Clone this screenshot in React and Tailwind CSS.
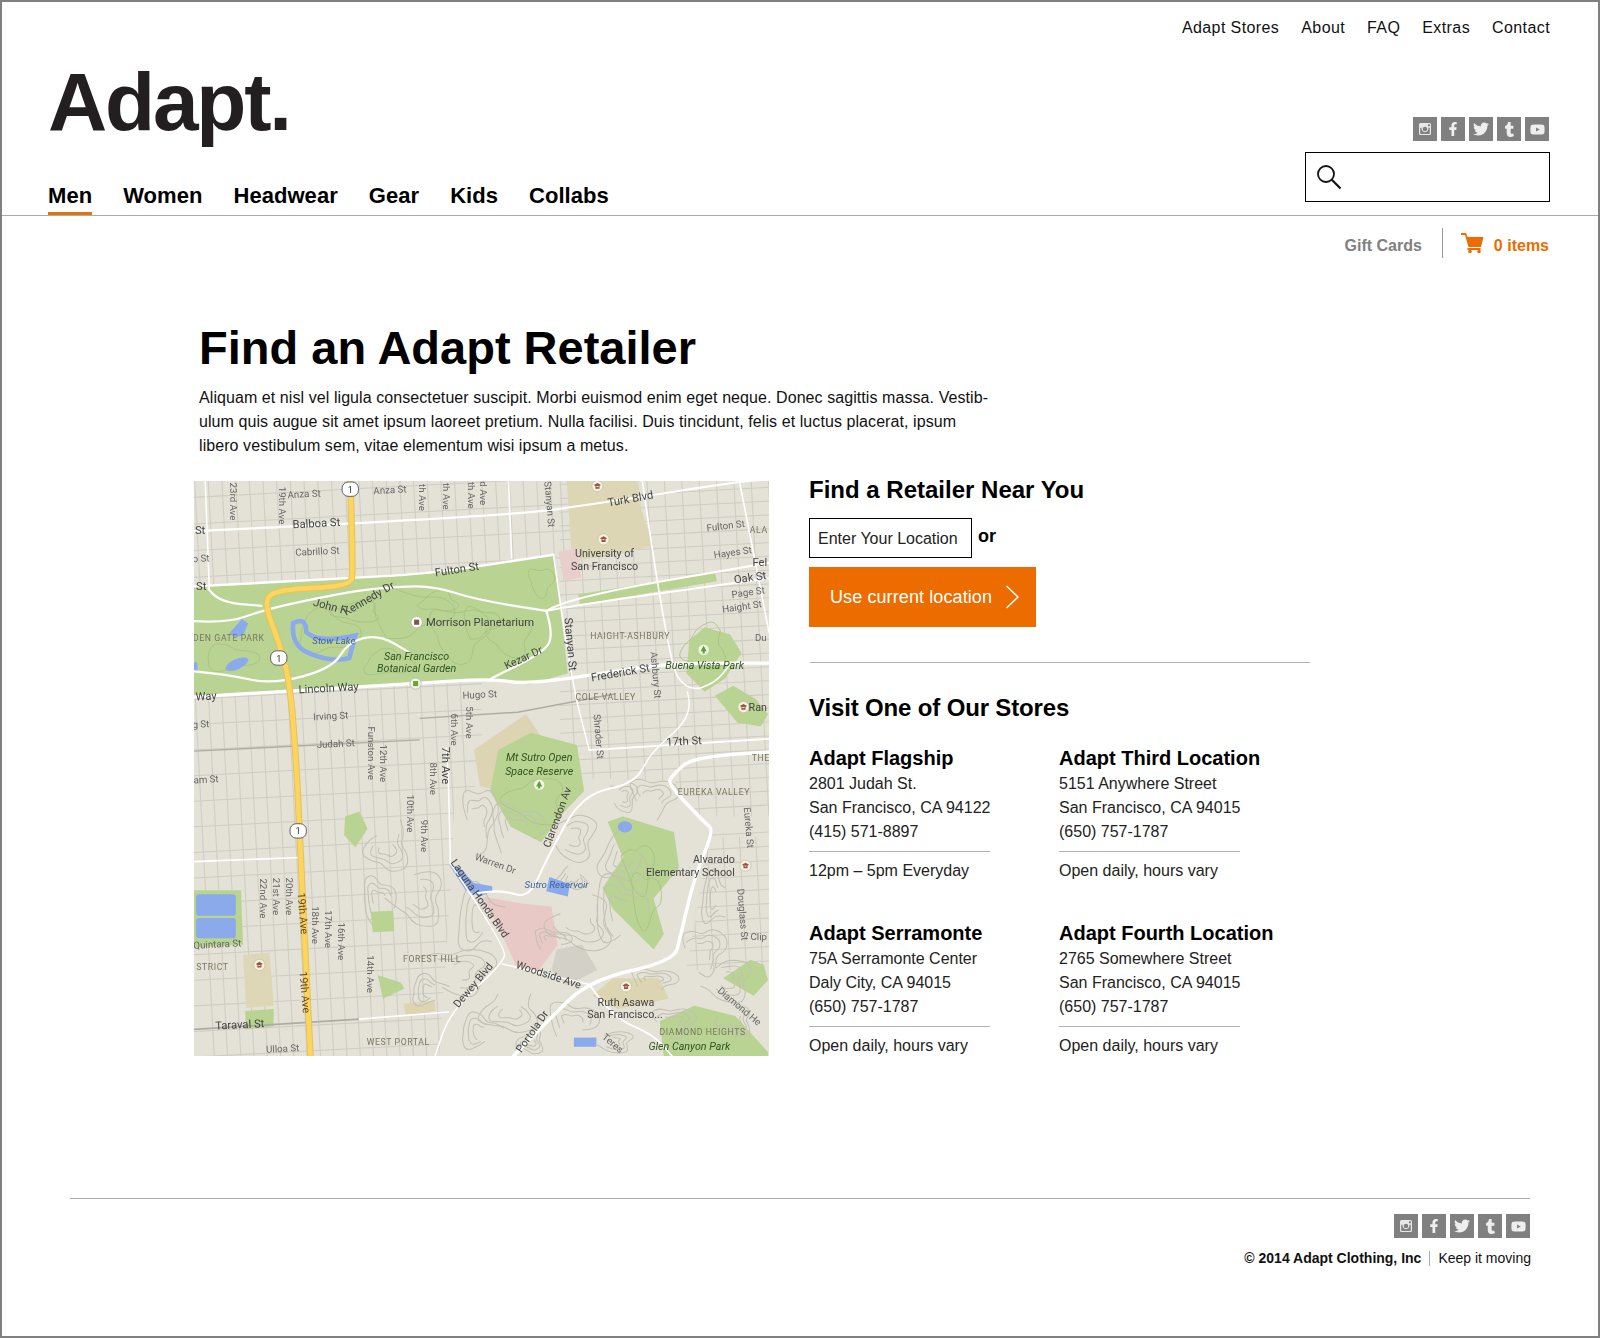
import { FaFacebookF, FaTwitter, FaTumblr, FaYoutube } from 'react-icons/fa';

// Map drawing is authored in a 563x562 coordinate space, offset to (190, 472)
function smooth(pts) {
    let d = `M${pts[0][0]} ${pts[0][1]}`;
    for (let i = 1; i < pts.length - 1; i++) {
        const mx = (pts[i][0] + pts[i + 1][0]) / 2;
        const my = (pts[i][1] + pts[i + 1][1]) / 2;
        d += ` Q${pts[i][0]} ${pts[i][1]} ${mx} ${my}`;
    }
    const last = pts[pts.length - 1];
    return `${d} L${last[0]} ${last[1]}`;
}

function poly(pts) {
    return pts.map(p => p.join(',')).join(' ');
}

function wobble(cx, cy, rx, ry, seed, steps = 14) {
    const pts = [];
    for (let i = 0; i <= steps; i++) {
        const a = (i / 14) * Math.PI * 2 + seed;
        const k = 1 + 0.28 * Math.sin(a * 3 + seed) + 0.12 * Math.cos(a * 5 + seed * 2);
        pts.push([+(cx + Math.cos(a) * rx * k).toFixed(1), +(cy + Math.sin(a) * ry * k).toFixed(1)]);
    }
    return smooth(pts);
}

const gridLines = [];
const TILT = 0.053;
function addGrid(x0, x1, y0, y1, dx, dy) {
    for (let x = x0; x <= x1; x += dx) {
        gridLines.push([x, y0, x + (y1 - y0) * TILT, y1]);
    }
    for (let y = y0; y <= y1; y += dy) {
        gridLines.push([x0, y, x1 + 20, y - (x1 + 20 - x0) * TILT]);
    }
}
addGrid(190, 548, 462, 590, 13.4, 26);
addGrid(190, 452, 660, 1040, 13, 25);
addGrid(548, 760, 462, 800, 17, 13.5);
addGrid(660, 760, 820, 1034, 16, 14);

const contours = [
    [470, 900, 24, 30, 1], [505, 810, 26, 22, 2], [470, 800, 16, 30, 3], [560, 820, 24, 22, 4], [570, 905, 30, 26, 5],
    [610, 840, 22, 26, 6], [606, 890, 26, 30, 1.5], [640, 960, 22, 12, 2.5], [450, 950, 34, 22, 3.5], [410, 880, 24, 26, 4.5],
    [500, 990, 26, 22, 5.5], [470, 1010, 20, 16, 1.2], [560, 1000, 24, 18, 2.2], [690, 930, 20, 22, 3.2], [710, 960, 26, 20, 4.2],
    [380, 830, 20, 24, 5.2], [370, 880, 16, 20, 1.8], [640, 780, 22, 18, 2.8], [610, 780, 14, 14, 3.8], [720, 1000, 16, 14, 4.8],
    [560, 860, 14, 12, 5.8], [700, 880, 14, 24, 0.8], [420, 970, 18, 14, 1.1], [540, 920, 18, 10, 2.1], [660, 1000, 20, 14, 3.1],
    [600, 1020, 20, 10, 4.1], [520, 1020, 12, 12, 5.1],
];

const parkDetail = [
    [320, 620, 30, 20, 1], [400, 600, 40, 22, 2], [450, 620, 28, 26, 3], [500, 625, 20, 18, 4], [350, 600, 22, 10, 5],
    [225, 645, 26, 12, 1.5], [632, 880, 14, 26, 2.5], [626, 850, 14, 24, 3.5], [525, 785, 28, 22, 4.5], [690, 635, 20, 22, 5.5],
    [380, 650, 24, 12, 0.5], [430, 590, 18, 10, 6], [470, 610, 18, 14, 2], [530, 570, 12, 14, 3],
];

const whiteRoads = [
    { w: 2.2, p: [[190, 521], [492, 507], [592, 493], [721, 473], [756, 470]] },
    { w: 2.4, p: [[190, 575], [345, 567], [426, 562], [542, 544]] },
    { w: 2.2, p: [[190, 609], [223, 611], [258, 598], [308, 587], [345, 580], [389, 575], [426, 575], [466, 588], [535, 599]] },
    { w: 2.2, p: [[204, 577], [212, 590], [256, 594]] },
    { w: 2.2, p: [[190, 658], [223, 661], [267, 671], [326, 655], [341, 629], [371, 622], [400, 639]] },
    { w: 2.2, p: [[535, 599], [542, 622], [533, 639], [481, 665]] },
    { w: 2, p: [[535, 599], [555, 586], [753, 552]] },
    { w: 2, p: [[535, 599], [558, 594], [753, 567]] },
    { w: 3.2, p: [[190, 683], [404, 670], [481, 665], [518, 671], [621, 655], [665, 650], [753, 650]] },
    { w: 1.5, p: [[542, 544], [558, 661], [577, 735]] },
    { w: 1.5, p: [[201, 472], [205, 577]] },
    { w: 1.5, p: [[498, 472], [501, 547]] },
    { w: 1.6, p: [[629, 472], [654, 648], [673, 678], [700, 670], [716, 650]] },
    { w: 1.6, p: [[724, 472], [753, 620]] },
    { w: 1.8, p: [[577, 735], [753, 724]] },
    { w: 1.4, p: [[673, 678], [680, 700], [640, 735], [628, 755]] },
    { w: 3.4, p: [[753, 737], [680, 740], [658, 760], [654, 768], [691, 807], [699, 813], [680, 859], [666, 918], [660, 941], [577, 960], [536, 1000], [503, 1034]] },
    { w: 2, p: [[628, 755], [621, 768], [570, 778], [536, 840], [518, 880], [492, 872], [466, 875]] },
    { w: 1.5, p: [[437, 733], [439, 755], [441, 846]] },
    { w: 1.5, p: [[441, 846], [496, 928], [492, 944], [441, 990], [426, 1034]] },
    { w: 1.6, p: [[352, 998], [439, 991]] },
    { w: 1.6, p: [[190, 844], [293, 840]] },
    { w: 1.5, p: [[492, 944], [577, 964]] },
    { w: 1.8, p: [[577, 964], [599, 996], [640, 1013], [658, 1034]] },
];

const labels = [
    ['Anza St', 298, 488, -3], ['Anza St', 382, 484, -3], ['Balboa St', 310, 517, -3, 11], ['Cabrillo St', 311, 544, -3],
    ['St', 196, 524, 0, 11], ['o St', 197, 551, -3], ['St', 197, 579, 0, 11], ['23rd Ave', 225, 492, 90], ['19th Ave', 273, 496, 90],
    ['th Ave', 410, 488, 90], ['th Ave', 434, 487, 90], ['th Ave', 458, 486, 90], ['d Ave', 470, 484, 90], ['Stanyan St', 535, 495, 85],
    ['Turk Blvd', 618, 493, -10, 11], ['Fulton St', 448, 562, -9, 11], ['University of', 592, 546, 0, 10.5], ['San Francisco', 592, 559, 0, 10.5],
    ['Fulton St', 711, 519, -7], ['Hayes St', 718, 545, -8], ['Fel', 744, 555, 0, 11], ['Oak St', 735, 570, -8, 11], ['Page St', 733, 584, -8],
    ['Haight St', 727, 598, -8], ['Du', 745, 628], ['Ran', 742, 697, 0, 10.5], ['John F', 322, 598, 15, 11], ['Kennedy Dr', 363, 590, -30, 11],
    ['Morrison Planetarium', 470, 614, 0, 11], ['Kezar Dr', 514, 648, -25, 10.5], ['Stanyan St', 555, 632, 85, 11], ['Frederick St', 608, 663, -10, 11],
    ['Ashbury St', 639, 662, 85], ['Hugo St', 470, 684, -3], ['Lincoln Way', 322, 678, -3, 11], ['Way', 202, 686, -3, 11], ['Irving St', 324, 705, -3],
    ['Judah St', 329, 732, -3], ['g St', 197, 713, -3], ['Funston Ave', 360, 738, 90], ['12th Ave', 372, 748, 90], ['5th Ave', 456, 708, 90],
    ['6th Ave', 442, 715, 90], ['7th Ave', 433, 750, 90, 11], ['Shrader St', 583, 722, 85], ['17th St', 670, 730, -3, 11], ['am St', 202, 767, -3],
    ['8th Ave', 421, 763, 90], ['10th Ave', 399, 797, 90], ['9th Ave', 412, 819, 90], ['Eureka St', 730, 811, 85], ['Clarendon Av', 549, 802, -70, 10.5],
    ['Warren Dr', 484, 849, 20], ['Alvarado', 699, 845, 0, 10.5], ['Elementary School', 676, 858, 0, 10.5], ['Laguna Honda Blvd', 467, 882, 55, 10.5],
    ['20th Ave', 280, 878, 90], ['21st Ave', 267, 878, 90], ['22nd Ave', 255, 880, 90], ['18th Ave', 306, 906, 90], ['17th Ave', 318, 910, 90],
    ['16th Ave', 331, 922, 90], ['14th Ave', 359, 954, 90], ['Douglass St', 724, 896, 85], ['Clip', 743, 921], ['Quintara St', 213, 928, -3],
    ['Dewey Blvd', 466, 967, -50, 10.5], ['Woodside Ave', 536, 958, 18, 10.5], ['Ruth Asawa', 613, 985, 0, 10.5], ['San Francisco...', 612, 997, 0, 10.5],
    ['Taraval St', 235, 1007, -3, 11], ['Ulloa St', 277, 1030, -3], ['Portola Dr', 524, 1012, -55, 10.5], ['Diamond He', 722, 988, 40], ['Teres', 598, 1024, 40],
];

const districts = [
    ['DEN GATE PARK', 224, 628], ['HAIGHT-ASHBURY', 617, 626], ['COLE VALLEY', 593, 686], ['EUREKA VALLEY', 699, 779], ['FOREST HILL', 423, 942],
    ['STRICT', 208, 950], ['WEST PORTAL', 390, 1023], ['DIAMOND HEIGHTS', 688, 1013], ['ALA', 743, 523], ['THE', 745, 746],
];

const italicGreen = [
    ['San Francisco', 408, 647], ['Botanical Garden', 408, 659], ['Buena Vista Park', 690, 656], ['Mt Sutro Open', 528, 746], ['Space Reserve', 528, 759], ['Glen Canyon Park', 675, 1028],
];

function Shield({ x, y }) {
    return (
        <g>
            <rect x={x - 8} y={y - 7} width="16" height="14" rx="6" fill="#fff" stroke="#555" strokeWidth="0.9" />
            <text x={x} y={y + 3.5} textAnchor="middle" fontSize="9" fill="#333">1</text>
        </g>
    );
}

function SchoolMark({ x, y }) {
    return (
        <g>
            <circle cx={x} cy={y} r="5.5" fill="#f5f1e2" stroke="#c9c1a8" strokeWidth="0.8" />
            <path d={`M${x - 3.5} ${y - 1} L${x} ${y - 3} L${x + 3.5} ${y - 1} L${x} ${y + 1} Z M${x - 2} ${y} V${y + 2.5} H${x + 2} V${y}`} fill="#96573f" />
        </g>
    );
}

function TreeMark({ x, y }) {
    return (
        <g>
            <circle cx={x} cy={y} r="5.5" fill="#f2f6e8" stroke="#b7cf97" strokeWidth="0.8" />
            <path d={`M${x} ${y - 4} L${x + 3} ${y + 1.5} H${x + 1} V${y + 3.5} H${x - 1} V${y + 1.5} H${x - 3} Z`} fill="#5fa02f" />
        </g>
    );
}

function RetailerMap() {
    const highway = smooth([[343, 472], [346, 560], [343, 575], [271, 578], [258, 590], [273, 629], [284, 668], [291, 760], [293, 813], [304, 1034]]);

    return (
        <svg viewBox="190 472 563 562" preserveAspectRatio="none" className="block w-[575px] h-[575px] shrink-0 mt-[7px] bg-[#e4e1d7] blur-[0.35px] font-['Roboto',sans-serif]">
            {gridLines.map((l, i) => (
                <line key={i} x1={l[0]} y1={l[1]} x2={l[2]} y2={l[3]} stroke="#cfcdc3" strokeWidth="1" />
            ))}

            {/* hills have no grid */}
            <polygon points={poly([[445, 785], [480, 760], [660, 765], [695, 820], [672, 950], [753, 950], [753, 1034], [430, 1034], [442, 860]])} fill="#e4e1d7" />

            {/* campuses and hospital */}
            <polygon points={poly([[555, 472], [625, 472], [628, 500], [640, 535], [600, 545], [560, 550]])} fill="#ddd6b4" />
            <polygon points={poly([[547, 541], [566, 538], [569, 566], [552, 570]])} fill="#e8cfcb" />
            <polygon points={poly([[464, 735], [515, 700], [532, 725], [490, 775], [470, 770]])} fill="#dcd4b2" />
            <polygon points={poly([[473, 878], [510, 885], [540, 888], [546, 925], [528, 950], [505, 945], [496, 925]])} fill="#e8c9c5" />
            <polygon points={poly([[545, 930], [570, 925], [585, 950], [555, 965], [540, 950]])} fill="#d3d0c8" />
            <polygon points={poly([[238, 935], [264, 933], [268, 985], [241, 987]])} fill="#ddd7b6" />
            <polygon points={poly([[580, 975], [600, 958], [645, 958], [655, 978], [605, 988]])} fill="#ddd5b2" />
            <polygon points={poly([[395, 983], [425, 980], [427, 990], [398, 995]])} fill="#ddd5b2" />

            {/* parks */}
            <polygon points={poly([[190, 576], [345, 567], [426, 562], [542, 544], [549, 600], [556, 660], [518, 671], [481, 665], [404, 670], [190, 683]])} fill="#b9d393" />
            <polygon points={poly([[566, 583], [700, 561], [702, 570], [568, 593]])} fill="#b9d393" />
            <polygon points={poly([[675, 628], [690, 615], [715, 622], [726, 640], [710, 665], [690, 678], [672, 660]])} fill="#b9d393" />
            <polygon points={poly([[700, 682], [718, 672], [740, 685], [752, 700], [745, 712], [722, 708]])} fill="#b9d393" />
            <polygon points={poly([[480, 775], [488, 735], [520, 718], [565, 730], [572, 775], [548, 800], [530, 825], [500, 810]])} fill="#b9d393" />
            <polygon points={poly([[595, 805], [610, 800], [660, 815], [665, 850], [640, 880], [650, 915], [640, 930], [600, 890], [590, 870], [610, 840]])} fill="#b9d393" />
            <polygon points={poly([[190, 872], [236, 872], [238, 925], [190, 928]])} fill="#b9d393" />
            <polygon points={poly([[363, 893], [385, 892], [386, 912], [365, 913]])} fill="#b9d393" />
            <polygon points={poly([[338, 800], [352, 795], [360, 812], [348, 830], [337, 818]])} fill="#b9d393" />
            <polygon points={poly([[370, 955], [392, 962], [396, 968], [375, 978]])} fill="#b9d393" />
            <polygon points={poly([[240, 990], [268, 988], [268, 1005], [241, 1008]])} fill="#b9d393" />
            <polygon points={poly([[646, 1000], [680, 985], [720, 995], [752, 1030], [752, 1034], [650, 1034]])} fill="#b9d393" />
            <polygon points={poly([[708, 958], [735, 940], [748, 945], [752, 960], [738, 975]])} fill="#b9d393" />
            {parkDetail.map((c, i) => (
                <path key={i} d={wobble(c[0], c[1], c[2], c[3], c[4])} fill="none" stroke="#a4c080" strokeWidth="0.8" />
            ))}

            {/* contour streets */}
            {contours.map((c, i) => (
                <g key={i} fill="none" stroke="#c3c0b4" strokeWidth="1">
                    <path d={wobble(c[0], c[1], c[2], c[3], c[4], 11)} />
                    <path d={wobble(c[0], c[1], c[2] * 0.7, c[3] * 0.7, c[4] + 0.3, 9)} />
                    <path d={wobble(c[0], c[1], c[2] * 0.4, c[3] * 0.4, c[4] + 0.6, 8)} />
                </g>
            ))}

            {/* water */}
            <path d="M287 611 Q300 604 300 620 Q312 631 348 623 L342 645 Q325 650 302 640 Q285 633 287 611 Z" fill="none" stroke="#8aaaec" strokeWidth="4.500" />
            <path d="M225 620 L237 607 L243 611 L238 623 L229 625 Z" fill="#8aaaec" />
            <ellipse cx="232" cy="651" rx="12" ry="5" fill="#8aaaec" transform="rotate(-25 232 651)" />
            <ellipse cx="191" cy="654" rx="2.500" ry="5" fill="#8aaaec" />
            <rect x="192" y="876" width="39" height="21" rx="3" fill="#8aaaec" />
            <rect x="192" y="899" width="39" height="20" rx="3" fill="#8aaaec" />
            <path d="M440 847 L450 850 L464 865 L482 868 L482 873 L470 878 L456 872 Z" fill="#8aaaec" />
            <polygon points={poly([[538, 859], [558, 866], [556, 878], [535, 873]])} fill="#8aaaec" />
            <ellipse cx="612" cy="810" rx="7" ry="5.500" fill="#8aaaec" />
            <rect x="562" y="1016" width="22" height="9" fill="#8aaaec" />

            {/* rail lines */}
            <polyline points={poly([[190, 736], [411, 725]])} fill="none" stroke="#aeaca3" strokeWidth="1.400" />
            <polyline points={poly([[411, 704], [507, 698], [603, 680]])} fill="none" stroke="#aeaca3" strokeWidth="1.400" />
            <polyline points={poly([[190, 1008], [352, 998]])} fill="none" stroke="#aeaca3" strokeWidth="1.600" />

            {whiteRoads.map((r, i) => (
                <path key={i} d={smooth(r.p)} fill="none" stroke="#fff" strokeWidth={r.w} strokeLinecap="round" strokeLinejoin="round" />
            ))}

            {/* highway 1 */}
            <path d={highway} fill="none" stroke="#e8c05c" strokeWidth="6.500" />
            <path d={highway} fill="none" stroke="#fbd65f" strokeWidth="4.500" />
            <Shield x={343} y={480} />
            <Shield x={273} y={645} />
            <Shield x={292} y={814} />

            <text x="293" y="895" transform="rotate(85 293 895)" textAnchor="middle" fontSize="10.5" fill="#6b4a16">19th Ave</text>
            <text x="295" y="972" transform="rotate(85 295 972)" textAnchor="middle" fontSize="10.5" fill="#6b4a16">19th Ave</text>

            <circle cx="408" cy="610" r="5.500" fill="#fff" stroke="#b8b5aa" strokeWidth="0.800" />
            <rect x="405.500" y="607.500" width="5" height="5" fill="#7c5a47" />
            <circle cx="407" cy="670" r="5.500" fill="#f3f3ea" stroke="#b8b5aa" strokeWidth="0.800" />
            <rect x="404.500" y="667.500" width="5" height="5" fill="#6aa62b" />
            <SchoolMark x={585} y={477} />
            <SchoolMark x={591} y={529} />
            <SchoolMark x={728} y={693} />
            <SchoolMark x={730} y={848} />
            <SchoolMark x={254} y={945} />
            <SchoolMark x={613} y={966} />
            <TreeMark x={689} y={637} />
            <TreeMark x={528} y={769} />

            {labels.map((l, i) => (
                <text key={i} x={l[1]} y={l[2]} transform={l[3] ? `rotate(${l[3]} ${l[1]} ${l[2]})` : undefined} textAnchor="middle" fontSize={l[4] || 9.5} fill={l[4] ? '#444' : '#666'}>
                    {l[0]}
                </text>
            ))}
            {districts.map((l, i) => (
                <text key={i} x={l[1]} y={l[2]} textAnchor="middle" fontSize="8.500" letterSpacing="0.600" fill="#7a7660">{l[0]}</text>
            ))}
            {italicGreen.map((l, i) => (
                <text key={i} x={l[1]} y={l[2]} textAnchor="middle" fontSize="10.500" fontStyle="italic" fill="#2f5420">{l[0]}</text>
            ))}
            <text x="327" y="631" textAnchor="middle" fontSize="9.500" fontStyle="italic" fill="#3f5f9c">Stow Lake</text>
            <text x="545" y="870" textAnchor="middle" fontSize="9.500" fontStyle="italic" fill="#3f5f9c">Sutro Reservoir</text>
        </svg>
    );
}

function InstagramGlyph() {
    return (
        <svg width="14" height="14" viewBox="0 0 14 14">
            <path fillRule="evenodd" fill="#e8e8e8" d="M2.500 1h9A1.500 1.500 0 0 1 13 2.500v9a1.500 1.500 0 0 1-1.500 1.500h-9A1.500 1.500 0 0 1 1 11.500v-9A1.500 1.500 0 0 1 2.500 1ZM2.200 5.800v5.400c0 .4.300.7.700.7h8.200c.4 0 .7-.3.700-.7V5.800h-1.400a3.500 3.500 0 1 1-6.800 0ZM7 4.700a2.300 2.300 0 1 0 0 4.600 2.300 2.300 0 0 0 0-4.600ZM10 2.300v2h1.900v-2Z" />
        </svg>
    );
}

function SocialIcons() {
    const box = 'w-6 h-6 bg-[#808080] flex items-center justify-center text-[#eeeeee]';
    return (
        <div className="flex gap-1">
            <a className={box}><InstagramGlyph /></a>
            <a className={box}><FaFacebookF size={14} /></a>
            <a className={box}><FaTwitter size={16} /></a>
            <a className={box}><FaTumblr size={15} /></a>
            <a className={box}><FaYoutube size={15} /></a>
        </div>
    );
}

function Store({ name, lines, hours }) {
    return (
        <div className="h-[136px]">
            <h4 className="text-[20px] leading-6 font-bold text-black mb-0.5">{name}</h4>
            <div className="text-base leading-6 text-[#222]">
                {lines.map(line => <div key={line}>{line}</div>)}
            </div>
            <div className="w-[181px] border-t border-[#b3b3b3] mt-[7px] mb-[7px]" />
            <div className="text-base leading-6 text-[#222]">{hours}</div>
        </div>
    );
}

const stores = [
    { name: 'Adapt Flagship', lines: ['2801 Judah St.', 'San Francisco, CA 94122', '(415) 571-8897'], hours: '12pm – 5pm Everyday' },
    { name: 'Adapt Third Location', lines: ['5151 Anywhere Street', 'San Francisco, CA 94015', '(650) 757-1787'], hours: 'Open daily, hours vary' },
    { name: 'Adapt Serramonte', lines: ['75A Serramonte Center', 'Daly City, CA 94015', '(650) 757-1787'], hours: 'Open daily, hours vary' },
    { name: 'Adapt Fourth Location', lines: ['2765 Somewhere Street', 'San Francisco, CA 94015', '(650) 757-1787'], hours: 'Open daily, hours vary' },
];

export default function App() {
    const mainNav = ['Men', 'Women', 'Headwear', 'Gear', 'Kids', 'Collabs'];
    const topNav = ['Adapt Stores', 'About', 'FAQ', 'Extras', 'Contact'];

    return (
        <div className="w-[1600px] h-[1338px] border-2 border-[#808080] bg-white text-[#111] font-['Liberation_Sans',Arial,sans-serif] overflow-hidden">
            {/* Header */}
            <header className="flex justify-between border-b border-[#aaaaaa] pl-[46px] pr-[48px] h-[214px]">
                <div className="pt-[60px]">
                    <div className="text-[82px] leading-[80px] font-bold tracking-[-2.2px] text-[#231f20]">Adapt.</div>
                    <nav className="flex gap-[31px] mt-[42px]">
                        {mainNav.map((item, i) => (
                            <a key={item} className={`text-[22px] leading-6 tracking-[0.05px] font-bold text-black pb-1 border-b-[3px] ${i === 0 ? 'border-[#e2740f]' : 'border-transparent'}`}>
                                {item}
                            </a>
                        ))}
                    </nav>
                </div>
                <div className="flex flex-col items-end pt-[14px]">
                    <nav className="flex gap-[22px] text-base leading-6 tracking-[0.4px] text-[#111]">
                        {topNav.map(item => <a key={item}>{item}</a>)}
                    </nav>
                    <div className="mt-[77px] mr-px"><SocialIcons /></div>
                    <div className="mt-[11px] w-[245px] h-[50px] border border-black flex items-center pl-[10px]">
                        <svg width="26" height="26" viewBox="0 0 26 26" fill="none" stroke="#111" strokeWidth="1.800">
                            <circle cx="10" cy="10" r="8" />
                            <path d="M15.800 15.800 L24.500 24.500" strokeWidth="2.200" />
                        </svg>
                    </div>
                </div>
            </header>

            {/* Cart bar */}
            <div className="flex justify-end items-center h-[30px] mt-3 pr-[49px] font-bold text-base">
                <span className="text-[#808080] pt-1.5">Gift Cards</span>
                <span className="w-px h-[30px] bg-[#999] ml-5 mr-[18px]" />
                <svg width="23" height="22" viewBox="0 0 23 22" fill="#ec6c00">
                    <path d="M0 1 H5 L6.500 5 H22.500 L20 15 H7.500 L4 3 H0 Z" />
                    <rect x="6.500" y="16" width="13" height="2" />
                    <circle cx="9" cy="19.500" r="1.800" />
                    <circle cx="18" cy="19.500" r="1.800" />
                </svg>
                <span className="text-[#ec6c00] ml-2.5 pt-1.5">0 items</span>
            </div>

            {/* Main */}
            <main className="pl-[192px]">
                <h1 className="text-[47px] leading-[56px] font-bold text-black mt-[62px] pl-[5px]">Find an Adapt Retailer</h1>
                <p className="text-base leading-6 tracking-[0.075px] text-[#111] mt-2.5 mb-4 pl-[5px]">
                    Aliquam et nisl vel ligula consectetuer suscipit. Morbi euismod enim eget neque. Donec sagittis massa. Vestib-<br />
                    ulum quis augue sit amet ipsum laoreet pretium. Nulla facilisi. Duis tincidunt, felis et luctus placerat, ipsum<br />
                    libero vestibulum sem, vitae elementum wisi ipsum a metus.
                </p>

                <div className="flex gap-10 items-start">
                    <RetailerMap />
                    <div className="w-[510px]">
                        <h2 className="text-[24px] leading-8 font-bold text-black">Find a Retailer Near You</h2>
                        <div className="flex items-start mt-3">
                            <div className="w-[163px] h-10 border border-black flex items-center pl-2 pt-0.5 text-base text-[#222]">Enter Your Location</div>
                            <span className="ml-1.5 text-[18px] leading-[36px] font-bold text-black">or</span>
                        </div>
                        <button className="mt-[9px] w-[227px] h-[60px] bg-[#ec6c00] text-white text-[18px] tracking-[0.1px] flex items-center pl-[21px]">
                            Use current location
                            <svg width="15" height="24" viewBox="0 0 15 24" fill="none" stroke="#fff" strokeWidth="1.500" className="ml-[13px]">
                                <path d="M1.500 1 L13 12 L1.500 23" />
                            </svg>
                        </button>
                        <div className="border-t border-[#b3b3b3] mt-[35px] ml-px w-[500px]" />
                        <h2 className="text-[24px] leading-8 tracking-[-0.15px] font-bold text-black mt-[29px]">Visit One of Our Stores</h2>
                        <div className="grid grid-cols-[250px_250px] gap-y-[39px] mt-[22px]">
                            {stores.map(s => <Store key={s.name} {...s} />)}
                        </div>
                    </div>
                </div>
            </main>

            {/* Footer */}
            <footer className="mt-[141px] ml-[68px] w-[1460px] border-t border-[#aaaaaa] pt-[15px] flex flex-col items-end">
                <SocialIcons />
                <div className="flex items-center mt-2.5 -mr-px text-[14px] leading-5 text-[#111]">
                    <span className="font-bold">© 2014 Adapt Clothing, Inc</span>
                    <span className="w-px h-[15px] bg-[#aaa] mx-2" />
                    <span>Keep it moving</span>
                </div>
            </footer>
        </div>
    );
}
